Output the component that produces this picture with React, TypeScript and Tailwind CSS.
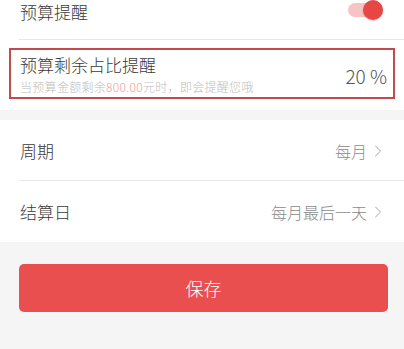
import { ChevronRight } from "lucide-react";

const FONT = { fontFamily: '"Noto Sans CJK SC", "Noto Sans", sans-serif' };

function Toggle() {
  return (
    <div className="relative mr-[21px] h-[20px] w-[35px]">
      <div className="absolute left-0 top-[3px] h-[14px] w-[35px] rounded-full bg-[#f6c4c4]" />
      <div className="absolute right-0 top-0 h-[20px] w-[20px] rounded-full bg-[#e84545] shadow-[0_1px_2px_rgba(0,0,0,0.2)]" />
    </div>
  );
}

function Row({ label, value, divider }: { label: string; value: string; divider?: boolean }) {
  return (
    <div className="relative flex h-[61px] items-center justify-between pl-[20px] pr-[16px]">
      <span className="text-[17px] font-light leading-[22px] text-[#3a3a3a]">{label}</span>
      <span className="flex items-center text-[16px] font-light leading-[22px] text-[#8a8a8a]">
        {value}
        <ChevronRight className="ml-[1px] h-[20px] w-[20px] text-[#9a9a9a]" strokeWidth={1.1} />
      </span>
      {divider && <div className="absolute bottom-0 left-[19px] right-0 h-px bg-[#e8e8e8]" />}
    </div>
  );
}

export default function App() {
  return (
    <div className="h-[349px] w-[404px] overflow-hidden bg-[#f5f5f5]" style={FONT}>
      <div className="bg-white">
        <div className="relative flex h-[40px] items-start justify-between pl-[20px]">
          <span className="text-[17px] font-light leading-[23px] text-[#3a3a3a]">预算提醒</span>
          <Toggle />
          <div className="absolute bottom-0 left-[19px] right-0 h-px bg-[#e8e8e8]" />
        </div>
        <div className="h-[70px] px-[9px] pt-[8px]">
          <div className="flex h-[51px] items-center justify-between border-2 border-[#c24a4d] pl-[9px] pr-[6px]">
            <div className="flex flex-col">
              <span className="text-[17px] font-light leading-[22px] text-[#3a3a3a]">预算剩余占比提醒</span>
              <span className="mt-[4px] text-[12px] font-light leading-[14px] tracking-[0.3px] text-[#bdbdbd]">
                当预算金额剩余<span className="text-[#f29a9a]">800.00</span>元时，即会提醒您哦
              </span>
            </div>
            <span className="mt-[4px] text-[19px] font-light leading-[22px] text-[#555]">20 %</span>
          </div>
        </div>
      </div>
      <div className="mt-[10px] bg-white">
        <Row label="周期" value="每月" divider />
        <Row label="结算日" value="每月最后一天" />
      </div>
      <button className="mx-[19px] mt-[22px] flex h-[48px] w-[369px] items-center justify-center rounded-[5px] bg-[#e94f4f] text-[18px] font-light text-white">
        保存
      </button>
    </div>
  );
}
